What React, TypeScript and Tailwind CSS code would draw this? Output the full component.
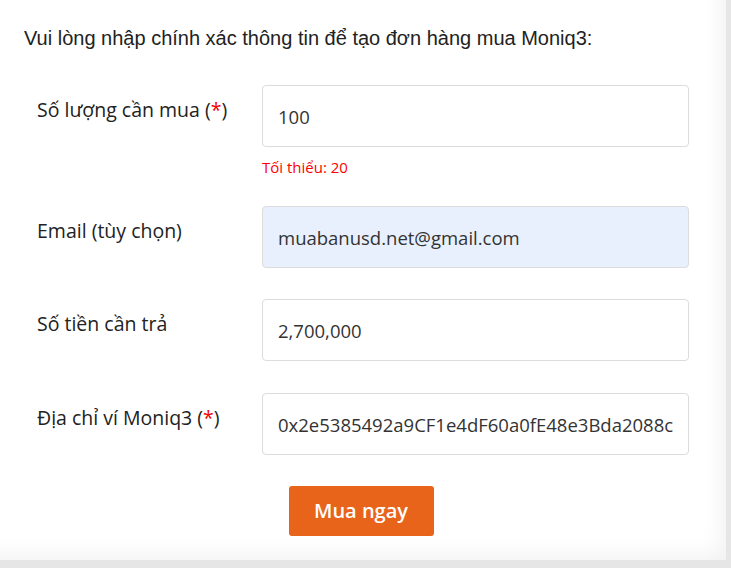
import React from "react";

const labelCls = "w-[225px] shrink-0 pt-[12px] text-[19.5px] font-medium text-[#222] leading-[26px]";
const inputCls =
  "w-[427px] h-[62px] rounded-[4px] border border-[#dcdcdc] px-[15px] text-[18.5px] text-[#333] outline-none";

function Req() {
  return <span className="text-[#f00000]">*</span>;
}

export default function App() {
  return (
    <div className="w-[731px] h-[568px] bg-[#e6e6e6] overflow-hidden" style={{ fontFamily: '"Open Sans", Roboto, sans-serif' }}>
      <div className="w-[726px] h-[560px] bg-white shadow-[inset_-18px_-18px_22px_-14px_rgba(0,0,0,0.06)]">
        <p className="pl-[24px] pt-[26px] text-[20px] text-[#222] leading-[24px]" style={{ fontFamily: '"Liberation Sans", Arial, sans-serif' }}>
          Vui lòng nhập chính xác thông tin để tạo đơn hàng mua Moniq3:
        </p>

        <div className="pl-[37px] pt-[35px] flex flex-col">
          <div className="flex">
            <div className={labelCls}>
              Số lượng cần mua (<Req />)
            </div>
            <div className="flex flex-col">
              <input className={inputCls + " bg-white"} defaultValue="100" />
              <span className="mt-[10px] text-[15px] leading-[20px] text-[#ff0000]">
                Tối thiểu: 20
              </span>
            </div>
          </div>

          <div className="flex mt-[29px]">
            <div className={labelCls}>Email (tùy chọn)</div>
            <input className={inputCls + " bg-[#e8f0fe]"} defaultValue="muabanusd.net@gmail.com" />
          </div>

          <div className="flex mt-[31px]">
            <div className={labelCls}>Số tiền cần trả</div>
            <input className={inputCls + " bg-white"} defaultValue="2,700,000" />
          </div>

          <div className="flex mt-[32px]">
            <div className={labelCls}>
              Địa chỉ ví Moniq3 (<Req />)
            </div>
            <input className={inputCls + " bg-white"} defaultValue="0x2e5385492a9CF1e4dF60a0fE48e3Bda2088c1f2b" />
          </div>
        </div>

        <div className="flex justify-center mt-[31px] pr-[4px]">
          <button className="w-[145px] h-[50px] rounded-[3px] bg-[#e8641a] text-white text-[20px] font-semibold">
            Mua ngay
          </button>
        </div>
      </div>
    </div>
  );
}
